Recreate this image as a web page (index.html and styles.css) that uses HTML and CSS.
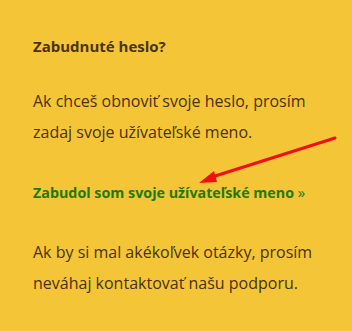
FILE: index.html
```html
<!DOCTYPE html>
<html lang="sk">
<head>
  <meta charset="UTF-8" />
  <title>Zabudnuté heslo</title>
  <link rel="stylesheet" href="styles.css">
</head>
<body>
  <div class="box">
    <h3 class="title">Zabudnuté heslo?</h3>
    <p>Ak chceš obnoviť svoje heslo, prosím zadaj svoje užívateľské meno.</p>
    <p class="more"><a href="#">Zabudol som svoje užívateľské meno</a> <span class="raquo">»</span></p>
    <p>Ak by si mal akékoľvek otázky, prosím neváhaj kontaktovať našu podporu.</p>

    <svg class="arrow" width="352" height="331" viewBox="0 0 352 331">
      <line x1="335" y1="138" x2="212" y2="177" stroke="#f01010" stroke-width="3" stroke-linecap="round" />
      <polygon points="199,183 214,171 217,182" fill="#f01010" />
    </svg>
  </div>
</body>
</html>
```

FILE: styles.css
```css
html, body {
  margin: 0;
  background: #f4c537;
}

.box {
  position: relative;
  height: 331px;
  padding: 22px 33px 0 33px;
  box-sizing: border-box;
  font-family: "Open Sans", sans-serif;
  color: #4a3210;
}

.title {
  margin: 14px 0 0 0;
  font-size: 15px;
  font-weight: 700;
  line-height: 20px;
}

.box p {
  margin: 0;
  font-size: 16px;
  line-height: 31px;
}

.title + p {
  margin-top: 30px;
}

.more {
  margin: 29px 0 !important;
  font-weight: 700;
  font-size: 14.3px !important;
  white-space: nowrap;
  color: #1e7a0c;
}

.more a {
  color: #1e7a0c;
  text-decoration: none;
}

.more .raquo {
  font-weight: 400;
  font-size: 15px;
}

.arrow {
  position: absolute;
  top: 0;
  left: 0;
  pointer-events: none;
}
```
